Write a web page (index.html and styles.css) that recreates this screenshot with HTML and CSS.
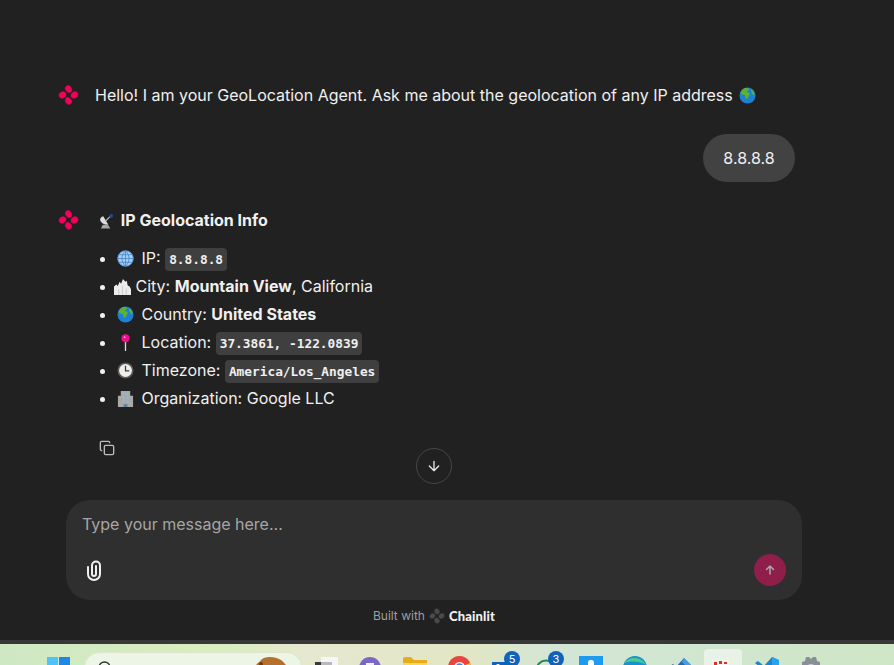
FILE: index.html
```html
<!DOCTYPE html>
<html lang="en">
<head>
  <meta charset="UTF-8">
  <title>GeoLocation Agent</title>
  <link rel="stylesheet" href="styles.css">
</head>
<body>
  <svg class="defs" width="0" height="0">
    <symbol id="logo" viewBox="0 0 22 22">
      <g id="petals">
        <path id="petal" d="M9.600 1.300c2.200-.9 4.400 1.400 4.700 3.600.2 1.500-.5 3-1.600 3.400-1.900.5-4.600-1.200-5-3.500-.3-1.600.4-3 1.900-3.500z"/>
        <use href="#petal" transform="rotate(90 11 11)"/>
        <use href="#petal" transform="rotate(180 11 11)"/>
        <use href="#petal" transform="rotate(270 11 11)"/>
      </g>
    </symbol>
    <symbol id="earth" viewBox="0 0 18 18">
      <circle cx="9" cy="9" r="8.500" fill="#1f7fd0"/>
      <path d="M6 1.200c2-.6 4 0 5 1-.5 1.500-2 1.500-2.500 2.800.8 1 2.500.6 3 2-.2 1.800-1.500 3-2.300 4.500-.4.800-1.200 1.500-1.900 1-.8-1.500-.2-3-1.200-4C4.500 8 2.500 8 1.500 6.500 2.300 4 4 2 6 1.200z" fill="#5cb32e"/>
      <path d="M13 2.500c2 1.300 3.400 3.500 3.500 6-1 .5-2-.2-2.500-1.300-.6-1.200-1.800-2.500-1-4.700z" fill="#5cb32e"/>
    </symbol>
  </svg>

  <div class="app">
    <main class="thread">
      <div class="msg">
        <svg class="avatar"><use href="#logo"/></svg>
        <p class="msg-text">Hello! I am your GeoLocation Agent. Ask me about the geolocation of any IP address <svg class="emoji emoji-end"><use href="#earth"/></svg></p>
      </div>

      <div class="user-row">
        <div class="bubble">8.8.8.8</div>
      </div>

      <div class="msg">
        <svg class="avatar"><use href="#logo"/></svg>
        <div class="answer">
          <p class="answer-title">
            <svg class="emoji-head" viewBox="0 0 16 16">
              <path d="M2 16l2-4 6 .5 2 3.500z" fill="#a8a8a8"/>
              <path d="M1 7c1.500 3.500 5 5.500 9 5L4.500 3C2.500 3.500 1.300 5 1 7z" fill="#dcdcdc"/>
              <path d="M7 8l5-5" stroke="#b5b5b5" stroke-width="1.200"/>
              <circle cx="13" cy="2.500" r="2" fill="#24489c"/>
            </svg>
            IP Geolocation Info
          </p>
          <ul class="info">
            <li>
              <svg class="emoji" viewBox="0 0 18 18">
                <circle cx="9" cy="9" r="8.200" fill="#a5d0f2" stroke="#5c9ad8"/>
                <path d="M9 1v16M1 9h16M2.200 5h13.600M2.200 13h13.600M9 1c-5 4-5 12 0 16M9 1c5 4 5 12 0 16" fill="none" stroke="#4a86c8" stroke-width=".9"/>
              </svg>
              IP: <code>8.8.8.8</code>
            </li>
            <li>
              <svg class="emoji emoji-city" viewBox="0 0 18 18">
                <path d="M0 18V9l2.500-2 1.500 1.500L6 4l1.500 2L9.500 1 12 4l1.500-1 1 5 2 1 1.500 3v6z" fill="#ececec"/>
                <path d="M5 12v6M9 8v10M13 11v7" stroke="#cfcfcf" stroke-width="1.200"/>
              </svg>
              City: <b>Mountain View</b>, California
            </li>
            <li>
              <svg class="emoji"><use href="#earth"/></svg>
              Country: <b>United States</b>
            </li>
            <li>
              <svg class="emoji" viewBox="0 0 18 18">
                <path d="M9 8v10" stroke="#d8d8d8" stroke-width="1.400"/>
                <circle cx="9" cy="4.500" r="4.300" fill="#ee0f8c"/>
                <circle cx="8" cy="3.500" r="1" fill="#ff9ad2"/>
              </svg>
              Location: <code>37.3861, -122.0839</code>
            </li>
            <li>
              <svg class="emoji" viewBox="0 0 18 18">
                <circle cx="9" cy="9" r="8.500" fill="#5a5a5a"/>
                <circle cx="9" cy="9" r="6.800" fill="#f1eeea"/>
                <path d="M9 4v5.300h4" fill="none" stroke="#3a3a3a" stroke-width="1.300"/>
              </svg>
              Timezone: <code>America/Los_Angeles</code>
            </li>
            <li>
              <svg class="emoji" viewBox="0 0 18 18">
                <path d="M1 6h3V1h10v5h3v12H1z" fill="#a9a9a9"/>
                <path d="M6 3h2v2H6zM10 3h2v2h-2zM6 7h2v2H6zM10 7h2v2h-2zM6 11h2v2H6zM10 11h2v2h-2z" fill="#8bbce4"/>
                <path d="M7 15h4v3H7z" fill="#5f7f9f"/>
              </svg>
              Organization: Google LLC
            </li>
          </ul>
          <button class="copy" type="button" aria-label="Copy">
            <svg width="16" height="16" viewBox="0 0 24 24" fill="none" stroke="currentColor" stroke-width="2" stroke-linecap="round" stroke-linejoin="round">
              <rect x="8" y="8" width="14" height="14" rx="2"/>
              <path d="M4 16c-1.100 0-2-.9-2-2V4c0-1.100.9-2 2-2h10c1.100 0 2 .9 2 2"/>
            </svg>
          </button>
        </div>
      </div>

      <button class="scroll-down" type="button" aria-label="Scroll to bottom">
        <svg width="16" height="16" viewBox="0 0 24 24" fill="none" stroke="currentColor" stroke-width="2" stroke-linecap="round" stroke-linejoin="round">
          <path d="M12 5v14M19 12l-7 7-7-7"/>
        </svg>
      </button>
    </main>

    <section class="composer">
      <div class="placeholder">Type your message here...</div>
      <div class="composer-tools">
        <svg class="clip" width="16" height="21" viewBox="0 0 16 21" fill="none" stroke="currentColor" stroke-width="2" stroke-linecap="round">
          <path d="M2 7v7a6 6 0 0 0 12 0V5.500a4 4 0 0 0-8 0V14a2 2 0 0 0 4 0V6"/>
        </svg>
        <button class="send" type="button" aria-label="Send">
          <svg width="12" height="12" viewBox="0 0 24 24" fill="none" stroke="currentColor" stroke-width="3" stroke-linecap="round" stroke-linejoin="round">
            <path d="M12 20V4M5 11l7-7 7 7"/>
          </svg>
        </button>
      </div>
    </section>

    <footer class="built">
      Built with
      <svg class="built-logo"><use href="#logo"/></svg>
      <span class="built-name">Chainlit</span>
    </footer>
  </div>

  <div class="taskbar">
    <svg class="tb tb-win" width="23" height="21" viewBox="0 0 23 21">
      <path d="M0 0h11v11H0z" fill="#4fc3f7"/><path d="M12 0h11v11H12z" fill="#1e88e5"/>
      <path d="M0 12h11v9H0z" fill="#1e88e5"/><path d="M12 12h11v9H12z" fill="#1565c0"/>
    </svg>
    <div class="search">
      <svg class="search-icon" width="14" height="14" viewBox="0 0 14 14" fill="none" stroke="#333" stroke-width="1.400"><circle cx="6.500" cy="6.500" r="5.500"/></svg>
      <span class="search-text">Search</span>
      <svg class="search-art" width="34" height="14" viewBox="0 0 34 14">
        <path d="M1 12c1-5 4-5 6-8 3-4 14-4 20 0 4 3 6 6 7 10H1z" fill="#b5702c"/>
        <circle cx="7" cy="8" r="2" fill="#6e3d14"/>
      </svg>
    </div>
    <svg class="tb tb-widget" width="23" height="20" viewBox="0 0 23 20">
      <path d="M0 5h12v15H0z" fill="#3a3a3a"/><path d="M6 0h17v20H6z" fill="#f6f6f6"/><path d="M6 5h11v15H6z" fill="#b9b9b9"/>
    </svg>
    <svg class="tb tb-teams" width="22" height="21" viewBox="0 0 22 21">
      <circle cx="11" cy="11" r="11" fill="#7a68c8"/><path d="M7 6h8v7H7z" fill="#f2f0fb"/>
    </svg>
    <svg class="tb tb-folder" width="24" height="21" viewBox="0 0 24 21">
      <path d="M0 2c0-1 .5-2 2-2h6l3 3h13v18H0z" fill="#e7ac1c"/><path d="M0 6h24v15H0z" fill="#fbd75b"/>
    </svg>
    <svg class="tb tb-chrome" width="23" height="21" viewBox="0 0 23 21">
      <circle cx="11.500" cy="11.500" r="11.500" fill="#e8453c"/>
      <path d="M11.500 11.500L22 7a11.500 11.500 0 0 1 1 5H11.500z" fill="#fbc02d"/>
      <circle cx="11.500" cy="11.500" r="5.500" fill="#fff"/><circle cx="11.500" cy="11.500" r="4.200" fill="#4285f4"/>
    </svg>
    <div class="tb tb-mail">
      <svg width="20" height="15" viewBox="0 0 20 15"><path d="M0 0h20v15H0z" fill="#0f62bd"/><circle cx="6" cy="4" r="2" fill="#fff"/></svg>
      <span class="badge">5</span>
    </div>
    <div class="tb tb-chat">
      <svg width="22" height="16" viewBox="0 0 22 16" fill="none" stroke="#1f8a50" stroke-width="2"><circle cx="11" cy="11" r="9.500"/><circle cx="9" cy="9" r="2" fill="#1f8a50"/></svg>
      <span class="badge">3</span>
    </div>
    <svg class="tb tb-blue" width="24" height="21" viewBox="0 0 24 21">
      <path d="M0 0h24v21H0z" fill="#1d9bf0"/><path d="M9 6c1-3 5-3 6 0v4H9z" fill="#fff"/>
    </svg>
    <svg class="tb tb-edge" width="24" height="21" viewBox="0 0 24 21">
      <circle cx="12" cy="12" r="12" fill="#1b8fd2"/><path d="M2 7C5 0 19 0 23 9c-4-3-14-5-21-2z" fill="#45cf8a"/>
    </svg>
    <svg class="tb tb-tick" width="21" height="15" viewBox="0 0 21 15">
      <path d="M0 8l3-2 3 3L14 0l7 7v8H0z" fill="#2468b8"/><path d="M14 0l7 7-3 3-6-6z" fill="#4a9be0"/>
    </svg>
    <div class="tb-active">
      <svg width="17" height="15" viewBox="0 0 17 15">
        <path d="M0 0h17v15H0z" fill="#f4f4f4"/>
        <path d="M2 2h3v3H2zM7 1h3v3H7zM12 2h3v2h-3zM2 7h3v8H2z" fill="#d4371c"/>
        <path d="M7 6h8v9H7z" fill="#d8d8d8"/>
      </svg>
    </div>
    <svg class="tb tb-vscode" width="24" height="21" viewBox="0 0 24 21">
      <path d="M17 0l7 3v18h-7V8l-8 7-6 5-3-2 7-6-7-6 3-2 6 5z" fill="#1a86d0"/><path d="M17 0l7 3v18h-7z" fill="#2ba3ea"/>
    </svg>
    <svg class="tb tb-gear" width="18" height="19" viewBox="0 0 18 19">
      <path d="M0 5l3-1 1-4h3l2 2 2-2h3l1 4 3 1v14H0z" fill="#8a8f96"/><circle cx="9" cy="11" r="4" fill="#c9ced4"/>
    </svg>
  </div>
</body>
</html>
```

FILE: styles.css
```css
* {
  box-sizing: border-box;
}
html, body {
  margin: 0;
  height: 665px;
  overflow: hidden;
}
body {
  background: #212121;
  font-family: "Inter", "Liberation Sans", sans-serif;
  font-size: 16px;
  line-height: 24px;
  color: #f0f0f0;
}
.defs {
  position: absolute;
}
p, ul {
  margin: 0;
}
button {
  font: inherit;
  color: inherit;
  background: none;
  border: none;
  padding: 0;
}

.app {
  width: 868px;
  height: 640px;
  display: flex;
  flex-direction: column;
}
.thread {
  position: relative;
  height: 500px;
  padding: 83px 73px 0 58px;
}
.msg {
  display: flex;
  gap: 16px;
}
.avatar {
  width: 21px;
  height: 22px;
  margin-top: 1px;
  fill: #f5005c;
  stroke: #f5005c;
  stroke-width: .6;
  flex: none;
}
.msg-text {
  white-space: nowrap;
}
.emoji {
  width: 17px;
  height: 17px;
  vertical-align: -3px;
  margin-right: 3px;
}
.emoji-end {
  margin: 0 0 0 2px;
}
.emoji-city {
  margin: 0 0 0 -3px;
}
.user-row {
  display: flex;
  justify-content: flex-end;
  margin: 27px 0 26px;
}
.bubble {
  width: 92px;
  height: 48px;
  padding: 12px 0;
  text-align: center;
  border-radius: 24px;
  background: #424242;
}
.answer {
  flex: 1;
}
.answer-title {
  font-weight: 700;
}
.emoji-head {
  width: 15px;
  height: 16px;
  margin: 0 3px 0 4px;
  vertical-align: -3px;
}
.info {
  list-style: disc;
  margin-top: 12px;
  padding-left: 22px;
  line-height: 28px;
}
.info b {
  font-weight: 700;
}
code {
  font-family: "DejaVu Sans Mono", "Liberation Mono", monospace;
  font-size: 12.800px;
  line-height: 1;
  font-weight: 700;
  background: #3f3f3f;
  padding: 4px;
  border-radius: 4px;
}
.copy {
  display: flex;
  margin: 28px 0 0 4px;
  height: 16px;
  color: #bdbdbd;
}
.scroll-down {
  position: absolute;
  left: 416px;
  top: 448px;
  width: 36px;
  height: 36px;
  border: 1px solid #474747;
  border-radius: 50%;
  color: #e8e8e8;
  display: flex;
  align-items: center;
  justify-content: center;
}

.composer {
  width: 736px;
  height: 100px;
  flex: none;
  margin: 0 auto;
  padding: 12px 16px 14px;
  display: flex;
  flex-direction: column;
  justify-content: space-between;
  background: #2f2f2f;
  border-radius: 24px;
}
.placeholder {
  color: #a6a6a6;
}
.composer-tools {
  display: flex;
  align-items: center;
  justify-content: space-between;
}
.clip {
  margin-left: 4px;
  color: #f0f0f0;
}
.send {
  width: 32px;
  height: 32px;
  border-radius: 50%;
  background: #8f1e4a;
  color: #a8a8a8;
  display: flex;
  align-items: center;
  justify-content: center;
}
.built {
  flex: 1;
  padding-top: 4px;
  display: flex;
  align-items: flex-start;
  justify-content: center;
  gap: 4px;
  font-size: 12px;
  color: #9f9f9f;
}
.built-logo {
  width: 16px;
  height: 16px;
  margin-top: 4px;
  fill: #4a4a4a;
  stroke: #4a4a4a;
  stroke-width: .8;
}
.built-name {
  font-family: "Lato", "Inter", sans-serif;
  font-weight: 900;
  font-size: 13px;
  letter-spacing: .15px;
  color: #f0f0f0;
}

.taskbar {
  height: 25px;
  border-top: 4px solid #383838;
  background: linear-gradient(90deg, #cfe8c4 0%, #d8eebd 24%, #e6e8cf 34%, #e2e6c4 52%, #d3e6d6 62%, #cfe6c6 100%);
  display: flex;
  align-items: flex-start;
  overflow: hidden;
  padding-left: 47px;
}
.tb {
  flex: none;
  margin-top: 13px;
  display: block;
}
.search {
  flex: none;
  width: 218px;
  height: 30px;
  margin: 8px 0 0 14px;
  padding: 8px 13px;
  display: flex;
  gap: 9px;
  font-size: 13px;
  line-height: 18px;
  color: #444;
  background: #edf5e6;
  border: 1px solid #dde6cc;
  border-radius: 15px;
}
.search-icon {
  flex: none;
}
.search-text {
  flex: 1;
}
.search-art {
  margin-top: -5px;
}
.tb-widget { margin-left: 13px; }
.tb-teams { margin-left: 21px; }
.tb-folder { margin-left: 22px; }
.tb-chrome { margin-left: 21px; margin-top: 12px; }
.tb-mail {
  position: relative;
  margin-left: 21px;
  width: 20px;
  margin-top: 15px;
}
.tb-chat {
  position: relative;
  margin-left: 23px;
  width: 22px;
  margin-top: 13px;
}
.badge {
  position: absolute;
  left: 12px;
  top: -8px;
  width: 16px;
  height: 16px;
  border-radius: 50%;
  background: #0f62bd;
  color: #fff;
  font-size: 11px;
  line-height: 16px;
  text-align: center;
}
.tb-chat .badge {
  left: 13px;
  top: -6px;
}
.tb-blue { margin-left: 22px; margin-top: 12px; }
.tb-edge { margin-left: 20px; margin-top: 12px; }
.tb-tick { margin-left: 23px; margin-top: 14px; }
.tb-active {
  flex: none;
  width: 38px;
  height: 30px;
  margin: 5px 0 0 13px;
  padding: 8px 0 0 8px;
  background: #e9f2e6;
  border-radius: 4px 4px 0 0;
}
.tb-vscode { margin-left: 13px; margin-top: 13px; }
.tb-gear { margin-left: 23px; margin-top: 13px; }
```
